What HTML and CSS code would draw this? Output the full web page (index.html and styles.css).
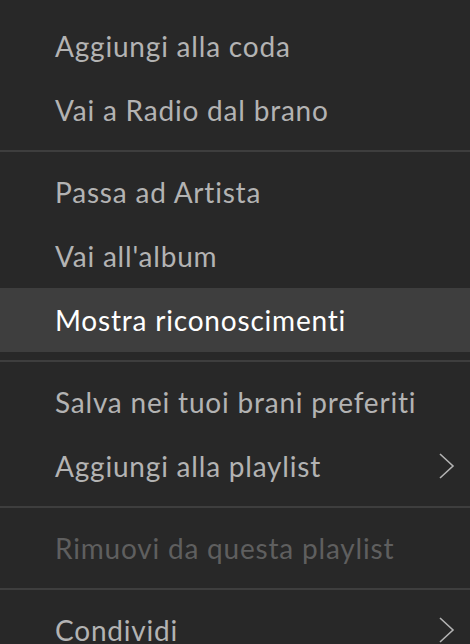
FILE: index.html
```html
<!DOCTYPE html>
<html lang="it">
<head>
<meta charset="utf-8">
<link rel="stylesheet" href="styles.css">
</head>
<body>
<div class="menu">
  <div class="item">Aggiungi alla coda</div>
  <div class="item">Vai a Radio dal brano</div>
  <div class="sep"></div>
  <div class="item">Passa ad Artista</div>
  <div class="item">Vai all'album</div>
  <div class="item active">Mostra riconoscimenti</div>
  <div class="sep"></div>
  <div class="item">Salva nei tuoi brani preferiti</div>
  <div class="item has-sub">Aggiungi alla playlist
    <svg class="chev" width="18" height="28" viewBox="0 0 18 28"><path d="M2 2 L15 14 L2 26" fill="none" stroke="currentColor" stroke-width="1.6"/></svg>
  </div>
  <div class="sep"></div>
  <div class="item disabled">Rimuovi da questa playlist</div>
  <div class="sep"></div>
  <div class="item has-sub">Condividi
    <svg class="chev" width="18" height="28" viewBox="0 0 18 28"><path d="M2 2 L15 14 L2 26" fill="none" stroke="currentColor" stroke-width="1.6"/></svg>
  </div>
</div>
</body>
</html>
```
FILE: styles.css
```css
html, body {
  margin: 0;
  padding: 0;
  background: #282828;
  height: 100%;
  overflow: hidden;
}
.menu {
  padding-top: 14px;
  display: flex;
  flex-direction: column;
  font-family: "Lato", "Open Sans", sans-serif;
  font-size: 28px;
  letter-spacing: 0.8px;
}
.item {
  height: 64px;
  flex: none;
  display: flex;
  align-items: center;
  justify-content: space-between;
  padding: 0 14px 0 55px;
  color: #b3b3b3;
}
.item.active {
  background: #3e3e3e;
  color: #ffffff;
}
.item.disabled {
  color: #5f5f5f;
}
.sep {
  flex: none;
  height: 2px;
  margin: 8px 0;
  background: #3e3e3e;
}
.chev {
  display: block;
  color: #b3b3b3;
}
```
